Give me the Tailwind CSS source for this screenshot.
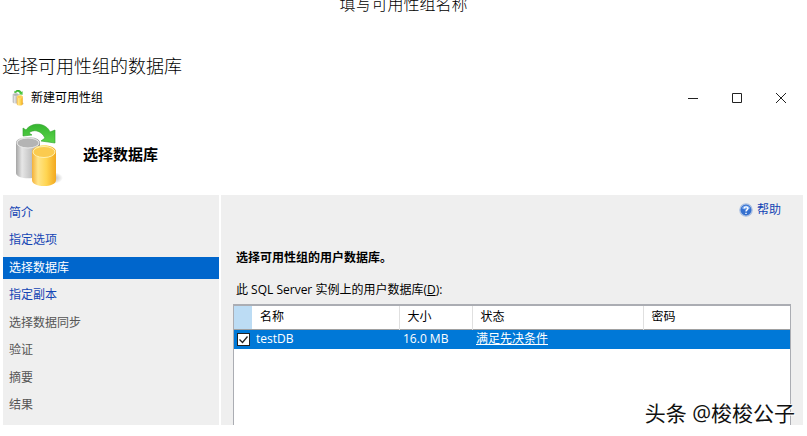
<!doctype html>
<html lang="zh-CN">
  <head>
    <meta charset="UTF-8" />
    <meta name="viewport" content="width=device-width, initial-scale=1.0" />
    <title>新建可用性组</title>
    <script src="https://cdn.jsdelivr.net/npm/@tailwindcss/browser@4"></script>
  </head>
  <body
    class="bg-white font-['Open_Sans','Noto_Sans_CJK_SC',sans-serif] text-[12px] leading-4 text-black"
  >
    <!-- 文章正文 -->
    <p class="-mt-2 text-center text-[16px] leading-6 font-light text-black">
      填写可用性组名称
    </p>
    <h2 class="mt-9 pl-0.5 text-[18px] leading-7 font-light text-black">
      选择可用性组的数据库
    </h2>

    <!-- 向导窗口 -->
    <main class="relative mt-1 mr-1 ml-[3px]">
      <!-- 标题栏 -->
      <header class="flex h-7 items-center justify-between pl-2">
        <div class="flex items-center gap-1">
          <svg class="size-4" viewBox="2 6 56 64" aria-hidden="true">
            <use href="#replica-icon" />
          </svg>
          <h1>新建可用性组</h1>
        </div>
        <div class="flex">
          <button type="button" aria-label="最小化" class="flex w-11 justify-center">
            <svg class="size-3" viewBox="0 0 12 12" stroke="#222" fill="none">
              <path d="M1 6.5h10" />
            </svg>
          </button>
          <button type="button" aria-label="最大化" class="flex w-11 justify-center">
            <svg class="size-3" viewBox="0 0 12 12" stroke="#222" fill="none">
              <path d="M1.5 1.5h9v9h-9z" />
            </svg>
          </button>
          <button type="button" aria-label="关闭" class="flex w-11 justify-center">
            <svg class="size-3" viewBox="0 0 12 12" stroke="#222" fill="none">
              <path d="M1 1l10 10M11 1L1 11" />
            </svg>
          </button>
        </div>
      </header>

      <!-- 页面标题 -->
      <div class="flex h-[83px] items-center gap-4 pl-2">
        <svg class="h-[72px] w-14" viewBox="0 0 56 72" aria-hidden="true">
          <defs>
            <linearGradient id="silver">
              <stop offset="0" stop-color="#a5a5a5" />
              <stop offset=".25" stop-color="#e6e6e6" />
              <stop offset=".6" stop-color="#c6c6c6" />
              <stop offset="1" stop-color="#969696" />
            </linearGradient>
            <linearGradient id="gold">
              <stop offset="0" stop-color="#f4b13a" />
              <stop offset=".25" stop-color="#ffe58a" />
              <stop offset=".6" stop-color="#ffd552" />
              <stop offset="1" stop-color="#f2a81f" />
            </linearGradient>
            <linearGradient id="green" x2="0" y2="1">
              <stop offset="0" stop-color="#35b52f" />
              <stop offset="1" stop-color="#5bd44a" />
            </linearGradient>
            <radialGradient id="shade">
              <stop offset="0" stop-color="#888" stop-opacity=".7" />
              <stop offset="1" stop-color="#888" stop-opacity="0" />
            </radialGradient>
            <g id="replica-icon">
              <ellipse cx="41" cy="60" rx="11" ry="6" fill="url(#shade)" />
              <path d="M5 25v30c0 7 24 7 24 0V25c0-8-24-8-24 0z" fill="url(#silver)" />
              <ellipse cx="17" cy="25" rx="11" ry="5" fill="#b4b4b4" stroke="#ececec" />
              <path d="M21 34v28c0 8 24 8 24 0V34c0-9-24-9-24 0z" fill="url(#gold)" />
              <ellipse cx="33" cy="34" rx="11" ry="5.500" fill="#fbcb4f" stroke="#fff0b0" />
              <path
                d="M12 10l3 2C20 4 35 4 39 14l5-2v13l-14-2 4-3C30 12 22 11 18 15l3 2-9 1z"
                fill="url(#green)"
                stroke="#2fa02c"
                stroke-width=".6"
              />
            </g>
          </defs>
          <use href="#replica-icon" />
        </svg>
        <h2 class="text-[15px] leading-6 font-bold">选择数据库</h2>
      </div>

      <div class="flex h-[230px] gap-0.5">
        <!-- 步骤导航 -->
        <nav class="w-[216px] shrink-0 bg-[#efefef] pt-[7px] pb-[9px]" aria-label="步骤">
          <ol class="flex h-full flex-col justify-between leading-[22px]">
            <li><a href="#" class="block pl-1.5 text-[#1445b4]">简介</a></li>
            <li><a href="#" class="block pl-1.5 text-[#1445b4]">指定选项</a></li>
            <li>
              <a href="#" aria-current="step" class="block bg-[#0066cc] pl-1.5 text-white">选择数据库</a>
            </li>
            <li><a href="#" class="block pl-1.5 text-[#1445b4]">指定副本</a></li>
            <li class="pl-1.5 text-[#555]">选择数据同步</li>
            <li class="pl-1.5 text-[#555]">验证</li>
            <li class="pl-1.5 text-[#555]">摘要</li>
            <li class="pl-1.5 text-[#555]">结果</li>
          </ol>
        </nav>

        <!-- 数据库选择 -->
        <section class="flex min-w-0 grow flex-col bg-[#efefef] pt-[7px] pr-3 pl-3">
          <a href="#" class="mr-2.5 flex items-center gap-1 self-end text-[#1445b4]">
            <svg class="size-3.5" viewBox="0 0 16 16" aria-hidden="true">
              <circle cx="8" cy="8" r="7" fill="#3570cf" stroke="#a9bfe2" stroke-width="1.500" />
              <path d="M3 6a5.500 5.500 0 0 1 10 0C10 8 6 8 3 6z" fill="#79a8ef" />
              <path
                d="M5.800 6.300C6 3.700 10.300 3.800 10.200 6.300 10.100 7.800 8 7.900 8 9.600M8 11v1.500"
                fill="none"
                stroke="#fff"
                stroke-width="1.600"
              />
            </svg>
            帮助
          </a>
          <h3 class="mt-8 pl-[3px] font-bold">选择可用性组的用户数据库。</h3>
          <p id="db-label" class="mt-4 pl-[3px]">
            此 SQL Server 实例上的用户数据库(<u>D</u>):
          </p>
          <div class="mt-1.5 grow border-x border-t-2 border-[#abadb3] bg-white">
            <table class="w-full table-fixed border-collapse text-left" aria-labelledby="db-label">
              <colgroup>
                <col class="w-[18px]" />
                <col class="w-[147px]" />
                <col class="w-[73px]" />
                <col class="w-[171px]" />
                <col />
              </colgroup>
              <thead>
                <tr class="h-[23px] border-b border-[#a0a0a0]">
                  <th class="bg-[#bcdcf4]"></th>
                  <th class="border-r border-[#e0e0e0] p-0 pl-2 font-normal">名称</th>
                  <th class="border-r border-[#e0e0e0] p-0 pl-2 font-normal">大小</th>
                  <th class="border-r border-[#e0e0e0] p-0 pl-2 font-normal">状态</th>
                  <th class="p-0 pl-2 font-normal">密码</th>
                </tr>
              </thead>
              <tbody>
                <tr class="h-5 bg-[#0078d7] text-white">
                  <td class="p-0 pl-[3px]">
                    <label class="relative block size-[13px]">
                      <input
                        type="checkbox"
                        checked
                        aria-label="testDB"
                        class="block size-[13px] appearance-none border border-[#222] bg-white"
                      />
                      <svg class="absolute inset-0" viewBox="0 0 13 13" fill="none" stroke="#222" stroke-width="1.300">
                        <path d="M2.500 6.500l3 3 5-6" />
                      </svg>
                    </label>
                  </td>
                  <td class="p-0 pl-1">testDB</td>
                  <td class="p-0 pl-1">16.0 MB</td>
                  <td class="p-0 pl-1"><a href="#" class="underline">满足先决条件</a></td>
                  <td></td>
                </tr>
              </tbody>
            </table>
          </div>
        </section>
      </div>

      <!-- 水印 -->
      <p
        class="absolute right-2 -bottom-1 text-[21px] leading-8 text-[#111] [text-shadow:1px_1px_0_#fff,-1px_-1px_0_#fff]"
      >
        头条 @梭梭公子
      </p>
    </main>
  </body>
</html>
